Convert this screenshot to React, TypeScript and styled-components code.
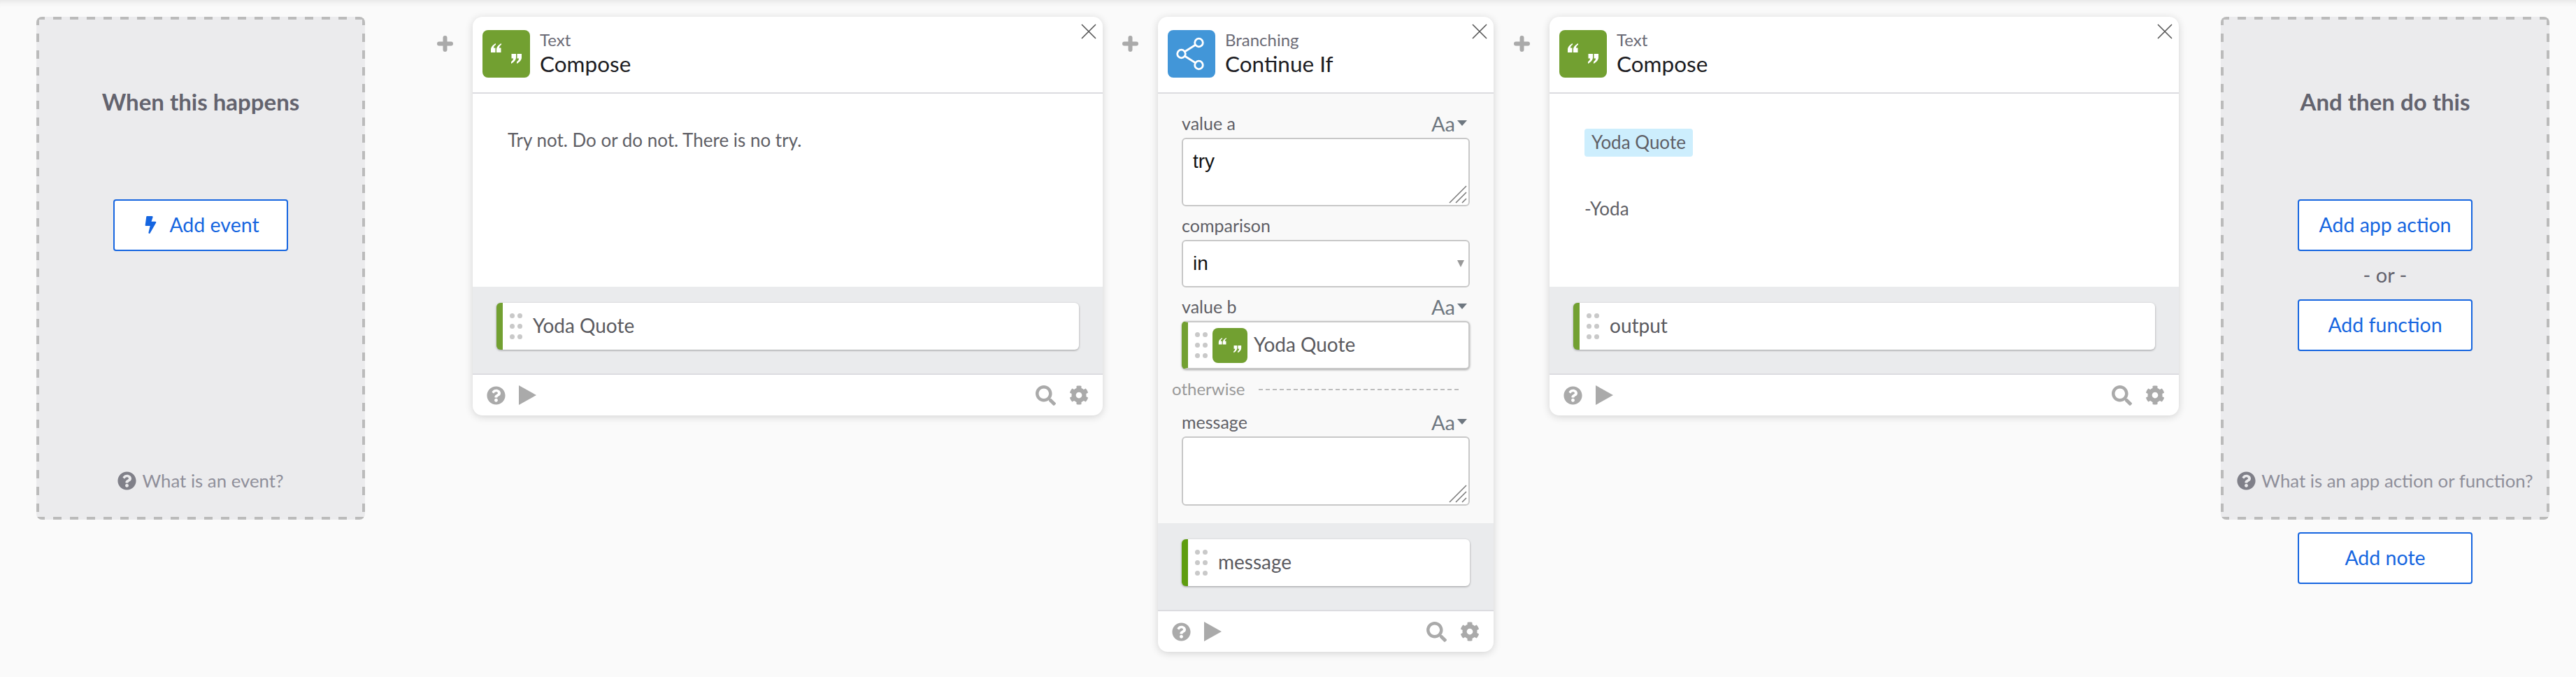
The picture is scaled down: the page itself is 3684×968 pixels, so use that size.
import React from 'react';
import styled, { createGlobalStyle } from 'styled-components';
import { FaBolt, FaCog, FaQuestionCircle, FaSearch } from 'react-icons/fa';

const GlobalStyle = createGlobalStyle`
  html, body {
    margin: 0;
    padding: 0;
    background: #fafafa;
  }
`;

const QuoteIcon = ({ size }: { size: number }) => (
  <svg width={size} height={size} viewBox="0 0 68 68" fill="#fff">
    <path d="M19 19c-4 2-7 5-7 9v4h6.500v-6.500h-2.500c0-2 1.200-3.500 3-4.500z" />
    <path d="M27 19c-4 2-7 5-7 9v4h6.500v-6.500h-2.500c0-2 1.200-3.500 3-4.500z" />
    <path d="M49 48c4-2 7-5 7-9v-5h-6.500v6.500h2.500c0 2-1.200 3.500-3 5z" />
    <path d="M41 48c4-2 7-5 7-9v-5h-6.500v6.500h2.500c0 2-1.200 3.500-3 5z" />
  </svg>
);

const ShareIcon = () => (
  <svg width="68" height="68" viewBox="0 0 68 68" fill="none" stroke="#fff" strokeWidth="2.800">
    <circle cx="44.500" cy="18" r="5.800" />
    <circle cx="19.500" cy="34" r="5.800" />
    <circle cx="44.500" cy="50" r="5.800" />
    <path d="M24.500 30.800 39.500 21.200M24.500 37.200 39.500 46.800" />
  </svg>
);

const CloseIcon = () => (
  <svg width="22" height="22" viewBox="0 0 22 22" stroke="#555" strokeWidth="1.600">
    <path d="M1 1 21 21M21 1 1 21" />
  </svg>
);

const PlusIcon = () => (
  <svg width="23" height="23" viewBox="0 0 23 23" stroke="#aaa" strokeWidth="6" strokeLinecap="round">
    <path d="M3 11.500h17M11.500 3v17" />
  </svg>
);

const PlayIcon = () => (
  <svg width="25" height="28" viewBox="0 0 25 28" fill="#aaa">
    <path d="M0 0 25 14 0 28z" />
  </svg>
);

const Page = styled.div`
  box-sizing: border-box;
  display: flex;
  align-items: flex-start;
  width: 3684px;
  height: 968px;
  padding: 24px 0 0 52px;
  background: #fafafa;
  box-shadow: inset 0 10px 10px -8px rgba(0, 0, 0, 0.1);
  font-family: Lato, 'Liberation Sans', sans-serif;
  overflow: hidden;
`;

const Connector = styled.div<{ $width: number; $lead?: number }>`
  flex: none;
  display: flex;
  justify-content: center;
  width: ${(p) => p.$width}px;
  margin-left: ${(p) => p.$lead ?? 0}px;
  padding-top: 27px;
`;

const PanelColumn = styled.div`
  flex: none;
  display: flex;
  flex-direction: column;
  align-items: center;
  gap: 18px;
  margin-left: 60px;
`;

const dash = 'linear-gradient(90deg, #bbbbbb 50%, transparent 50%)';
const dashV = 'linear-gradient(180deg, #bbbbbb 50%, transparent 50%)';

const Panel = styled.div<{ $width: number }>`
  box-sizing: border-box;
  display: flex;
  flex-direction: column;
  align-items: center;
  flex: none;
  width: ${(p) => p.$width}px;
  height: 719px;
  padding: 101px 0 41px;
  background:
    ${dash} top left / 24px 4px repeat-x,
    ${dash} bottom left / 24px 4px repeat-x,
    ${dashV} top left / 4px 24px repeat-y,
    ${dashV} top right / 4px 24px repeat-y,
    #ebebed;
  border-radius: 8px;
`;

const PanelTitle = styled.div`
  height: 40px;
  margin-bottom: 120px;
  color: #63636e;
  font-size: 33px;
  font-weight: 700;
  line-height: 40px;
`;

const OutlineButton = styled.div`
  box-sizing: border-box;
  display: flex;
  align-items: center;
  justify-content: center;
  gap: 14px;
  width: 250px;
  height: 74px;
  padding-bottom: 2px;
  background: #fff;
  border: 2px solid #1565e0;
  border-radius: 4px;
  color: #1565e0;
  font-size: 28.500px;
`;

const OrText = styled.div`
  height: 69px;
  color: #63636e;
  font-size: 29px;
  line-height: 67px;
`;

const HelpLink = styled.div`
  display: flex;
  align-items: center;
  gap: 8px;
  height: 30px;
  margin-top: auto;
  color: #8f8f9a;
  font-size: 25.800px;
  white-space: nowrap;
  svg {
    color: #808089;
  }
`;

const Card = styled.div<{ $width: number }>`
  position: relative;
  flex: none;
  width: ${(p) => p.$width}px;
  background: #fff;
  border-radius: 14px;
  box-shadow: 0 2px 12px rgba(0, 0, 0, 0.16);
  overflow: hidden;
`;

const CloseButton = styled.div`
  position: absolute;
  top: 10px;
  right: 9px;
  display: flex;
`;

const CardHeader = styled.div`
  box-sizing: border-box;
  display: flex;
  align-items: center;
  gap: 14px;
  height: 110px;
  padding: 0 14px 2px;
  border-bottom: 2px solid #dcdce0;
`;

const AppIcon = styled.div<{ $bg: string; $size: number }>`
  flex: none;
  display: flex;
  width: ${(p) => p.$size}px;
  height: ${(p) => p.$size}px;
  background: ${(p) => p.$bg};
  border-radius: 8px;
`;

const HeaderText = styled.div`
  display: flex;
  flex-direction: column;
  padding-bottom: 2px;
`;

const AppName = styled.div`
  color: #6b6b76;
  font-size: 24px;
  line-height: 30px;
`;

const ActionName = styled.div`
  color: #1c1c22;
  font-size: 31.500px;
  line-height: 38px;
`;

const TextBody = styled.div<{ $pad: number }>`
  box-sizing: border-box;
  height: 276px;
  padding: 50px ${(p) => p.$pad}px 0;
  color: #5f5f66;
  font-size: 26px;
  line-height: 32px;
`;

const Chip = styled.div`
  display: inline-block;
  padding: 3px 10px 5px;
  background: #cdeefd;
  border-radius: 4px;
  font-size: 26px;
  line-height: 32px;
`;

const SignOff = styled.div`
  margin-top: 58px;
  font-size: 26px;
`;

const FormBody = styled.div`
  display: flex;
  flex-direction: column;
  padding: 29px 34px 25px;
  background: #f9f9f9;
`;

const FieldHead = styled.div`
  box-sizing: border-box;
  display: flex;
  align-items: center;
  justify-content: space-between;
  height: 28px;
  margin-bottom: 6px;
  padding: 0 4px 2px 0;
`;

const FieldLabel = styled.div`
  color: #5f5f66;
  font-size: 25px;
`;

const TypeToggle = styled.div`
  display: flex;
  align-items: center;
  gap: 3px;
  color: #6e7780;
  font-size: 29px;
  &::after {
    content: '';
    border-left: 7px solid transparent;
    border-right: 7px solid transparent;
    border-top: 8px solid #6e7780;
  }
`;

const TextArea = styled.div<{ $height: number; $gap: number }>`
  position: relative;
  box-sizing: border-box;
  height: ${(p) => p.$height}px;
  margin-bottom: ${(p) => p.$gap}px;
  padding: 16px 14px;
  background: #fff;
  border: 2px solid #c8c8c8;
  border-radius: 6px;
  color: #111;
  font-family: 'Liberation Sans', Arial, sans-serif;
  font-size: 28px;
  line-height: 32px;
`;

const ResizeHandle = styled.svg`
  position: absolute;
  right: 2px;
  bottom: 2px;
`;

const SelectBox = styled.div`
  box-sizing: border-box;
  display: flex;
  align-items: center;
  justify-content: space-between;
  height: 68px;
  margin-bottom: 14px;
  padding: 0 6px 0 14px;
  background: #fff;
  border: 2px solid #c8c8c8;
  border-radius: 6px;
  color: #111;
  font-family: 'Liberation Sans', Arial, sans-serif;
  font-size: 28px;
  &::after {
    content: '';
    border-left: 5.500px solid transparent;
    border-right: 5.500px solid transparent;
    border-top: 10px solid #999;
  }
`;

const Pill = styled.div<{ $strip: string; $framed?: boolean }>`
  box-sizing: border-box;
  display: flex;
  align-items: center;
  height: ${(p) => (p.$framed ? 69 : 67)}px;
  background: #fff;
  border: ${(p) => (p.$framed ? '2px solid #c8c8c8' : 'none')};
  border-left: 9px solid ${(p) => p.$strip};
  border-radius: 6px;
  box-shadow: 0 1px 3px rgba(0, 0, 0, 0.35);
  color: #5a5a60;
  font-size: 28px;
`;

const PillLabel = styled.span`
  padding-bottom: 3px;
`;

const Grip = styled.div<{ $right: number }>`
  flex: none;
  display: grid;
  grid-template-columns: 7px 7px;
  grid-auto-rows: 7px;
  gap: 8px 4px;
  margin: 0 ${(p) => p.$right}px 0 10px;
`;

const GripDot = styled.span`
  border-radius: 50%;
  background: #c9c9c9;
`;

const PillIcon = styled.div`
  margin-right: 9px;
`;

const Otherwise = styled.div`
  box-sizing: border-box;
  display: flex;
  align-items: center;
  gap: 20px;
  height: 28px;
  margin: 14px 16px 20px -14px;
  padding-bottom: 2px;
  color: #999;
  font-size: 24px;
  &::after {
    content: '';
    flex: 1;
    margin-top: 4px;
    border-top: 2px dashed #bdbdbd;
  }
`;

const OutputTray = styled.div`
  padding: 23px 34px 34px;
  background: #eaebed;
  border-bottom: 2px solid #dcdce0;
`;

const CardFooter = styled.div`
  display: flex;
  align-items: center;
  gap: 19px;
  height: 58px;
  padding: 0 20px;
  color: #aaa;
`;

const FooterSpacer = styled.div`
  flex: 1;
`;

const grip = (right: number) => (
  <Grip $right={right}>
    {[0, 1, 2, 3, 4, 5].map((i) => (
      <GripDot key={i} />
    ))}
  </Grip>
);

const Footer = () => (
  <CardFooter>
    <FaQuestionCircle size={27} />
    <PlayIcon />
    <FooterSpacer />
    <FaSearch size={29} />
    <FaCog size={28} />
  </CardFooter>
);

const handle = (
  <ResizeHandle width="26" height="26" viewBox="0 0 26 26" stroke="#777" strokeWidth="1.500">
    <path d="M1 25 25 1M10 25 25 10M19 25 25 19" />
  </ResizeHandle>
);

const App = () => {
  return (
    <Page>
      <GlobalStyle />
      <Panel $width={470}>
        <PanelTitle>When this happens</PanelTitle>
        <OutlineButton>
          <FaBolt size={25} />
          Add event
        </OutlineButton>
        <HelpLink>
          <FaQuestionCircle size={27} />
          What is an event?
        </HelpLink>
      </Panel>

      <Connector $width={79} $lead={75}>
        <PlusIcon />
      </Connector>

      <Card $width={901}>
        <CloseButton>
          <CloseIcon />
        </CloseButton>
        <CardHeader>
          <AppIcon $bg="#72a031" $size={68}>
            <QuoteIcon size={68} />
          </AppIcon>
          <HeaderText>
            <AppName>Text</AppName>
            <ActionName>Compose</ActionName>
          </HeaderText>
        </CardHeader>
        <TextBody $pad={50}>Try not. Do or do not. There is no try.</TextBody>
        <OutputTray>
          <Pill $strip="#72a031">
            {grip(15)}
            <PillLabel>Yoda Quote</PillLabel>
          </Pill>
        </OutputTray>
        <Footer />
      </Card>

      <Connector $width={79}>
        <PlusIcon />
      </Connector>

      <Card $width={480}>
        <CloseButton>
          <CloseIcon />
        </CloseButton>
        <CardHeader>
          <AppIcon $bg="#4296d8" $size={68}>
            <ShareIcon />
          </AppIcon>
          <HeaderText>
            <AppName>Branching</AppName>
            <ActionName>Continue If</ActionName>
          </HeaderText>
        </CardHeader>
        <FormBody>
          <FieldHead>
            <FieldLabel>value a</FieldLabel>
            <TypeToggle>Aa</TypeToggle>
          </FieldHead>
          <TextArea $height={98} $gap={14}>
            try
            {handle}
          </TextArea>
          <FieldHead>
            <FieldLabel>comparison</FieldLabel>
          </FieldHead>
          <SelectBox>in</SelectBox>
          <FieldHead>
            <FieldLabel>value b</FieldLabel>
            <TypeToggle>Aa</TypeToggle>
          </FieldHead>
          <Pill $strip="#72a031" $framed>
            {grip(7)}
            <PillIcon>
              <AppIcon $bg="#72a031" $size={50}>
                <QuoteIcon size={50} />
              </AppIcon>
            </PillIcon>
            <PillLabel>Yoda Quote</PillLabel>
          </Pill>
          <Otherwise>otherwise</Otherwise>
          <FieldHead>
            <FieldLabel>message</FieldLabel>
            <TypeToggle>Aa</TypeToggle>
          </FieldHead>
          <TextArea $height={99} $gap={0}>
            {handle}
          </TextArea>
        </FormBody>
        <OutputTray>
          <Pill $strip="#5f9d0f">
            {grip(15)}
            <PillLabel>message</PillLabel>
          </Pill>
        </OutputTray>
        <Footer />
      </Card>

      <Connector $width={80}>
        <PlusIcon />
      </Connector>

      <Card $width={900}>
        <CloseButton>
          <CloseIcon />
        </CloseButton>
        <CardHeader>
          <AppIcon $bg="#72a031" $size={68}>
            <QuoteIcon size={68} />
          </AppIcon>
          <HeaderText>
            <AppName>Text</AppName>
            <ActionName>Compose</ActionName>
          </HeaderText>
        </CardHeader>
        <TextBody $pad={50}>
          <Chip>Yoda Quote</Chip>
          <SignOff>-Yoda</SignOff>
        </TextBody>
        <OutputTray>
          <Pill $strip="#72a031">
            {grip(15)}
            <PillLabel>output</PillLabel>
          </Pill>
        </OutputTray>
        <Footer />
      </Card>

      <PanelColumn>
        <Panel $width={470}>
          <PanelTitle>And then do this</PanelTitle>
          <OutlineButton>Add app action</OutlineButton>
          <OrText>- or -</OrText>
          <OutlineButton>Add function</OutlineButton>
          <HelpLink>
            <FaQuestionCircle size={27} />
            What is an app action or function?
          </HelpLink>
        </Panel>
        <OutlineButton>Add note</OutlineButton>
      </PanelColumn>
    </Page>
  );
};

export default App;
